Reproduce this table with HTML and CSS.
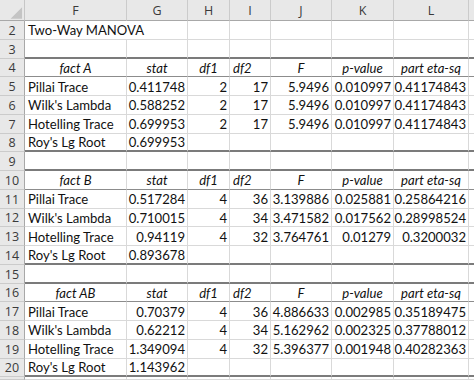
FILE: index.html
```html
<!DOCTYPE html>
<html>
<head>
<meta charset="utf-8">
<link rel="stylesheet" href="styles.css">
</head>
<body>
<div class="sheet">
  <div class="row">
    <div class="c corner"><svg width="25" height="21" viewBox="0 0 25 21"><polygon points="23,7 23,19 11,19" fill="#c4c4c4"/></svg></div>
    <div class="c ch">F</div><div class="c ch">G</div><div class="c ch">H</div><div class="c ch">I</div><div class="c ch">J</div><div class="c ch">K</div><div class="c ch">L</div><div class="c ch"></div>
  </div>
  <div class="row">
    <div class="c rh">2</div><div class="c span2">Two-Way MANOVA</div><div class="c"></div><div class="c"></div><div class="c"></div><div class="c"></div><div class="c"></div><div class="c"></div>
  </div>
  <div class="row thick">
    <div class="c rh">3</div><div class="c"></div><div class="c"></div><div class="c"></div><div class="c"></div><div class="c"></div><div class="c"></div><div class="c"></div><div class="c"></div>
  </div>
  <div class="row head">
    <div class="c rh">4</div><div class="c h">fact A</div><div class="c h">stat</div><div class="c h">df1</div><div class="c h left">df2</div><div class="c h">F</div><div class="c h">p-value</div><div class="c h">part eta-sq</div><div class="c"></div>
  </div>
  <div class="row">
    <div class="c rh">5</div><div class="c">Pillai Trace</div><div class="c n">0.411748</div><div class="c n">2</div><div class="c n">17</div><div class="c n">5.9496</div><div class="c n">0.010997</div><div class="c n">0.41174843</div><div class="c"></div>
  </div>
  <div class="row">
    <div class="c rh">6</div><div class="c">Wilk's Lambda</div><div class="c n">0.588252</div><div class="c n">2</div><div class="c n">17</div><div class="c n">5.9496</div><div class="c n">0.010997</div><div class="c n">0.41174843</div><div class="c"></div>
  </div>
  <div class="row">
    <div class="c rh">7</div><div class="c">Hotelling Trace</div><div class="c n">0.699953</div><div class="c n">2</div><div class="c n">17</div><div class="c n">5.9496</div><div class="c n">0.010997</div><div class="c n">0.41174843</div><div class="c"></div>
  </div>
  <div class="row thick">
    <div class="c rh">8</div><div class="c">Roy's Lg Root</div><div class="c n">0.699953</div><div class="c"></div><div class="c"></div><div class="c"></div><div class="c"></div><div class="c"></div><div class="c"></div>
  </div>
  <div class="row thick">
    <div class="c rh">9</div><div class="c"></div><div class="c"></div><div class="c"></div><div class="c"></div><div class="c"></div><div class="c"></div><div class="c"></div><div class="c"></div>
  </div>
  <div class="row head">
    <div class="c rh">10</div><div class="c h">fact B</div><div class="c h">stat</div><div class="c h">df1</div><div class="c h left">df2</div><div class="c h">F</div><div class="c h">p-value</div><div class="c h">part eta-sq</div><div class="c"></div>
  </div>
  <div class="row">
    <div class="c rh">11</div><div class="c">Pillai Trace</div><div class="c n">0.517284</div><div class="c n">4</div><div class="c n">36</div><div class="c n">3.139886</div><div class="c n">0.025881</div><div class="c n">0.25864216</div><div class="c"></div>
  </div>
  <div class="row">
    <div class="c rh">12</div><div class="c">Wilk's Lambda</div><div class="c n">0.710015</div><div class="c n">4</div><div class="c n">34</div><div class="c n">3.471582</div><div class="c n">0.017562</div><div class="c n">0.28998524</div><div class="c"></div>
  </div>
  <div class="row">
    <div class="c rh">13</div><div class="c">Hotelling Trace</div><div class="c n">0.94119</div><div class="c n">4</div><div class="c n">32</div><div class="c n">3.764761</div><div class="c n">0.01279</div><div class="c n">0.3200032</div><div class="c"></div>
  </div>
  <div class="row thick">
    <div class="c rh">14</div><div class="c">Roy's Lg Root</div><div class="c n">0.893678</div><div class="c"></div><div class="c"></div><div class="c"></div><div class="c"></div><div class="c"></div><div class="c"></div>
  </div>
  <div class="row thick">
    <div class="c rh">15</div><div class="c"></div><div class="c"></div><div class="c"></div><div class="c"></div><div class="c"></div><div class="c"></div><div class="c"></div><div class="c"></div>
  </div>
  <div class="row head">
    <div class="c rh">16</div><div class="c h">fact AB</div><div class="c h">stat</div><div class="c h">df1</div><div class="c h left">df2</div><div class="c h">F</div><div class="c h">p-value</div><div class="c h">part eta-sq</div><div class="c"></div>
  </div>
  <div class="row">
    <div class="c rh">17</div><div class="c">Pillai Trace</div><div class="c n">0.70379</div><div class="c n">4</div><div class="c n">36</div><div class="c n">4.886633</div><div class="c n">0.002985</div><div class="c n">0.35189475</div><div class="c"></div>
  </div>
  <div class="row">
    <div class="c rh">18</div><div class="c">Wilk's Lambda</div><div class="c n">0.62212</div><div class="c n">4</div><div class="c n">34</div><div class="c n">5.162962</div><div class="c n">0.002325</div><div class="c n">0.37788012</div><div class="c"></div>
  </div>
  <div class="row">
    <div class="c rh">19</div><div class="c">Hotelling Trace</div><div class="c n">1.349094</div><div class="c n">4</div><div class="c n">32</div><div class="c n">5.396377</div><div class="c n">0.001948</div><div class="c n">0.40282363</div><div class="c"></div>
  </div>
  <div class="row thick">
    <div class="c rh">20</div><div class="c">Roy's Lg Root</div><div class="c n">1.143962</div><div class="c"></div><div class="c"></div><div class="c"></div><div class="c"></div><div class="c"></div><div class="c"></div>
  </div>
  <div class="row">
    <div class="c rh"></div><div class="c"></div><div class="c"></div><div class="c"></div><div class="c"></div><div class="c"></div><div class="c"></div><div class="c"></div><div class="c"></div>
  </div>
</div>
</body>
</html>
```

FILE: styles.css
```css
* { box-sizing: border-box; }
html, body { margin: 0; padding: 0; background: #ffffff; }
body { font-family: Lato, "Open Sans", sans-serif; }

.sheet {
  display: grid;
  grid-template-columns: 25px 102px 61px 42px 41px 61px 62px 75px 1fr;
  grid-template-rows: 21px repeat(19, 18.75px) 1fr;
  width: 474px;
  height: 380px;
  overflow: hidden;
}

.row { display: contents; }

.c {
  display: flex;
  align-items: center;
  padding: 1px 3px 0 3px;
  border-right: 1px solid #d9d9d9;
  border-bottom: 1px solid #d9d9d9;
  font-size: 13.1px;
  color: #111;
  white-space: nowrap;
  min-width: 0;
  overflow: visible;
}

.span2 { grid-column: span 2; }

.n { justify-content: flex-end; padding-right: 2px; }

.h { font-style: italic; justify-content: center; }
.h.left { justify-content: flex-start; }

.corner {
  padding: 0;
  background: #e8e8e8;
  border-right: 1px solid #c6c6c6;
  border-bottom: 1px solid #a8a8a8;
}
.corner svg { display: block; }

.ch {
  background: #e8e8e8;
  color: #3a3a3a;
  justify-content: center;
  font-family: "Open Sans", Lato, sans-serif;
  font-size: 12.5px;
  border-right: 1px solid #cbcbcb;
  border-bottom: 1px solid #a8a8a8;
}

.rh {
  background: #e8e8e8;
  color: #3a3a3a;
  justify-content: center;
  padding: 1px 0 0 0;
  font-family: "Open Sans", Lato, sans-serif;
  font-size: 12.5px;
  border-right: 1px solid #a8a8a8;
  border-bottom: 1px solid #cbcbcb;
}

.thick > .c:not(.rh) { border-bottom: 2px solid #7b7b7b; }
.head > .c:not(.rh) { border-bottom: 1px solid #8c8c8c; }
```
